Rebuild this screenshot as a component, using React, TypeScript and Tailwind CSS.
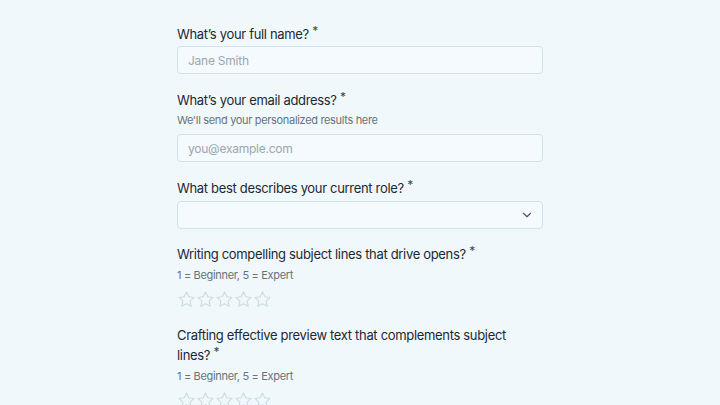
import { ChevronDown } from "lucide-react";

const Star = () => (
  <svg width="19" height="19" viewBox="0 0 24 24" fill="none" stroke="#c8dce4" strokeWidth="1.4" strokeLinejoin="round">
    <path d="M12 2.5l2.9 6.1 6.6.8-4.9 4.6 1.3 6.6L12 17.3l-5.9 3.3 1.3-6.6-4.9-4.6 6.6-.8z" />
  </svg>
);

const Label = ({ children }: { children: React.ReactNode }) => (
  <p className="text-[13px] leading-[20px] tracking-[-0.025em] text-[#1c2832]">
    {children}
    {"\u00a0"}
    <span className="relative -top-[4px] text-[12px] leading-none text-[#3a4751]">*</span>
  </p>
);

const Hint = ({ children }: { children: React.ReactNode }) => (
  <p className="mt-[3px] text-[11px] leading-[16px] tracking-[-0.03em] text-[#66737b]">{children}</p>
);

const Stars = () => (
  <div className="mt-[7px] flex">
    {[1, 2, 3, 4, 5].map((n) => (
      <Star key={n} />
    ))}
  </div>
);

const inputCls =
  "h-[28px] w-full rounded-[4px] border border-[#cfe3ea] bg-[#f4fafd] px-[10px] text-[12px] tracking-[-0.02em] text-[#1f2b35] placeholder:text-[#9ba7ae] outline-none";

export default function App() {
  return (
    <div className="min-h-screen bg-[#f1f8fc] font-['Inter',sans-serif]">
      <div className="mx-auto w-[366px] pt-[24px]">
        {/* name */}
        <div className="mb-[16px]">
          <Label>What’s your full name?</Label>
          <input className={`mt-[2px] ${inputCls}`} placeholder="Jane Smith" />
        </div>

        {/* email */}
        <div className="mb-[16px]">
          <Label>What’s your email address?</Label>
          <p className="mt-[2px] text-[11px] leading-[16px] tracking-[-0.03em] text-[#66737b]">
            We'll send your personalized results here
          </p>
          <input className={`mt-[6px] ${inputCls}`} placeholder="you@example.com" />
        </div>

        {/* role */}
        <div className="mb-[15px]">
          <Label>What best describes your current role?</Label>
          <div className="mt-[3px] flex h-[28px] w-full items-center justify-end rounded-[4px] border border-[#cfe3ea] bg-[#f4fafd] px-[8px]">
            <ChevronDown size={14} color="#4b5963" />
          </div>
        </div>

        {/* ratings */}
        <div className="mb-[16px]">
          <Label>Writing compelling subject lines that drive opens?</Label>
          <Hint>1 = Beginner, 5 = Expert</Hint>
          <Stars />
        </div>

        <div className="mb-[16px]">
          <Label>Crafting effective preview text that complements subject lines?</Label>
          <Hint>1 = Beginner, 5 = Expert</Hint>
          <Stars />
        </div>
      </div>
    </div>
  );
}
